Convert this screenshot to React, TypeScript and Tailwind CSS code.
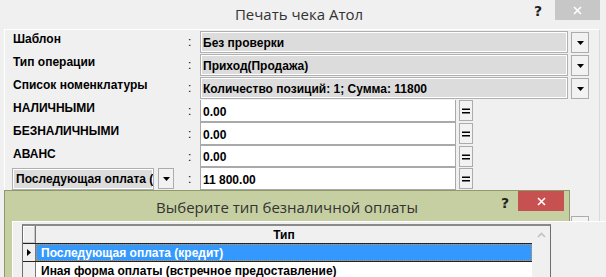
import type { ReactNode } from 'react';

const Tri = () => (
  <svg width="7" height="4" viewBox="0 0 7 4" aria-hidden>
    <path d="M0 0h7L3.5 4z" fill="#000" />
  </svg>
);

const Cross = () => (
  <svg width="9" height="9" viewBox="0 0 9 9" aria-hidden>
    <path d="M1 1l7 7M8 1l-7 7" stroke="#fff" strokeWidth="1.6" />
  </svg>
);

function DropBtn({ w = 18 }: { w?: number }) {
  return (
    <div
      className={`flex h-[21px] items-center justify-center border border-[#acacac] bg-[#f2f2f2] ${
        w === 18 ? 'w-[18px]' : 'w-[16px]'
      }`}
    >
      <Tri />
    </div>
  );
}

function EqBtn() {
  return (
    <div className="ml-[3px] flex h-[21px] w-[14px] items-center justify-center border border-[#acacac] bg-[#f2f2f2]">
      <svg width="8" height="6" viewBox="0 0 8 6" aria-hidden>
        <path d="M0 0.5h8v1.6H0zM0 3.9h8v1.6H0z" fill="#000" />
      </svg>
    </div>
  );
}

function Colon() {
  return <div className="w-[14px] pl-[2px] pt-[4px] font-normal leading-[14px]">:</div>;
}

function Label({ children }: { children: ReactNode }) {
  return (
    <>
      <div className="w-[181px] truncate pl-[8px] pt-[1px] leading-[14px]">{children}</div>
      <Colon />
    </>
  );
}

function ComboRow({ label, value }: { label: string; value: string }) {
  return (
    <div className="flex h-[23px] items-start">
      <Label>{label}</Label>
      <div className="flex h-[22px] w-[368px] items-center border border-[#b0b0b0] bg-[#dcdcdc] pl-[2px] pt-[2px] shadow-[inset_0_0_0_1px_#fff]">
        {value}
      </div>
      <div className="ml-[3px] mt-[1px]">
        <DropBtn />
      </div>
    </div>
  );
}

function MoneyRow({ left, value, h }: { left: ReactNode; value: string; h: string }) {
  return (
    <div className={`flex items-start ${h}`}>
      {left}
      <div className="flex h-full w-[256px] items-end border-x border-b-2 border-[#a9a9a9] bg-white pb-[2px] pl-[2px] leading-[14px]">
        {value}
      </div>
      <EqBtn />
    </div>
  );
}

export default function App() {
  return (
    <div className="relative h-[277px] w-[606px] overflow-hidden bg-[#f0f0f0] font-['Liberation_Sans',sans-serif] text-[12px] font-bold text-black">
      {/* заголовок окна */}
      <div className="relative flex h-[29px] items-center justify-center pr-[8px]">
        <span className="font-['Open_Sans',sans-serif] text-[15px] font-normal text-[#333]">Печать чека Атол</span>
        <span className="absolute left-[534px] top-[1px] font-['DejaVu_Sans',sans-serif] text-[14px] text-[#222]">?</span>
        <div className="absolute left-[555px] top-0 flex h-[20px] w-[45px] items-center justify-center bg-[#c7c7c7]">
          <Cross />
        </div>
      </div>

      {/* основная панель */}
      <div className="ml-[4px] h-[260px] w-[596px] border-l border-r border-t border-l-white border-r-[#dadada] border-t-white pt-[1px]">
        <ComboRow label="Шаблон" value="Без проверки" />
        <ComboRow label="Тип операции" value="Приход(Продажа)" />
        <ComboRow label="Список номенклатуры" value="Количество позиций: 1; Сумма: 11800" />
        <MoneyRow h="h-[23px]" left={<Label>НАЛИЧНЫМИ</Label>} value="0.00" />
        <MoneyRow h="h-[23px]" left={<Label>БЕЗНАЛИЧНЫМИ</Label>} value="0.00" />
        <MoneyRow h="h-[22px]" left={<Label>АВАНС</Label>} value="0.00" />
        <MoneyRow
          h="h-[23px]"
          left={
            <>
              <div className="flex w-[181px] items-start pl-[7px]">
                <div className="h-[22px] w-[142px] overflow-hidden whitespace-nowrap border border-[#b0b0b0] bg-[#dcdcdc] pl-[3px] pt-[3px] leading-[14px] shadow-[inset_0_0_0_1px_#fff]">
                  Последующая оплата (кредит)
                </div>
                <div className="ml-[4px]">
                  <DropBtn w={16} />
                </div>
              </div>
              <Colon />
            </>
          }
          value="11 800.00"
        />
        <div className="h-[24px]" />
        <div className="flex h-[23px] items-start pl-[566px] pt-[1px]">
          <DropBtn />
        </div>
        <div className="flex h-[23px] items-start pl-[566px] pt-[1px]">
          <DropBtn />
        </div>
      </div>

      {/* диалог выбора типа оплаты */}
      <div className="absolute left-[4px] top-[190px] h-[100px] w-[566px] border border-[#8e9a6c] bg-[#c6cfa1]">
        <div className="relative flex h-[30px] items-center justify-center">
          <span className="pt-[2px] font-['Open_Sans',sans-serif] text-[15px] font-normal text-[#333]">
            Выберите тип безналичной оплаты
          </span>
          <span className="absolute left-[496px] top-[2px] font-['DejaVu_Sans',sans-serif] text-[14px] text-[#222]">?</span>
          <div className="absolute left-[513px] top-0 flex h-[20px] w-[46px] items-center justify-center bg-[#c75050]">
            <Cross />
          </div>
        </div>
        <div className="ml-[7px] h-[70px] w-[600px] border-l border-t border-white bg-[#f0f0f0] pl-[9px] pt-[2px]">
          <div className="flex h-[60px] w-[529px] border border-t-2 border-[#6f6f6f] border-t-[#8a8a8a] bg-white">
            <div className="flex flex-1 flex-col">
              {/* шапка */}
              <div className="flex h-[18px] border-b border-[#222] bg-[#f0f0f0]">
                <div className="w-[13px] border-r border-[#777] shadow-[inset_-1px_-1px_0_#c8c8c8,inset_1px_1px_0_#fff]" />
                <div className="flex-1 pt-[2px] text-center leading-[14px]">Тип</div>
              </div>
              <div className="flex h-[18px] border-b border-[#222]">
                <div className="flex w-[13px] items-center justify-center border-r border-[#777] bg-[#f0f0f0]">
                  <svg width="4" height="7" viewBox="0 0 4 7" aria-hidden>
                    <path d="M0 0l4 3.5L0 7z" fill="#000" />
                  </svg>
                </div>
                <div className="flex flex-1 items-center border border-dotted border-[#e0902a] bg-[#3399ff] pl-[4px] leading-[14px] text-white">
                  Последующая оплата (кредит)
                </div>
              </div>
              <div className="flex h-[18px]">
                <div className="w-[13px] border-r border-[#777] bg-[#f0f0f0]" />
                <div className="flex flex-1 items-center pl-[5px] leading-[14px]">
                  Иная форма оплаты (встречное предоставление)
                </div>
              </div>
            </div>
            <div className="flex w-[18px] justify-center bg-[#f0f0f0] pt-[6px]">
              <svg width="9" height="6" viewBox="0 0 9 6" aria-hidden>
                <path d="M1 5l3.5-3.5L8 5" stroke="#c2c2c2" strokeWidth="1.6" fill="none" />
              </svg>
            </div>
          </div>
        </div>
      </div>
    </div>
  );
}
